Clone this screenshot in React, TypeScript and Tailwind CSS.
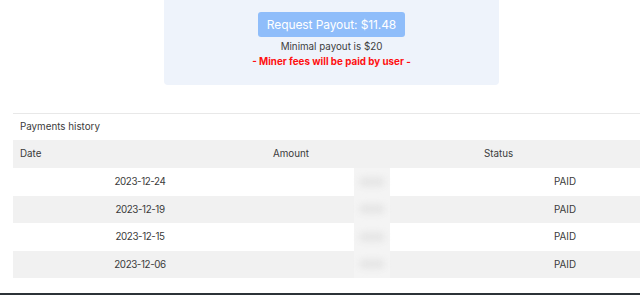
import React from "react";

const rows = [
  { date: "2023-12-24", gray: false },
  { date: "2023-12-19", gray: true },
  { date: "2023-12-15", gray: false },
  { date: "2023-12-06", gray: true },
];

export default function App() {
  return (
    <div
      className="w-[640px] h-[295px] overflow-hidden bg-white flex flex-col text-[#3a3a3a]"
      style={{ fontFamily: "Inter, 'Open Sans', sans-serif" }}
    >
      <div className="pl-[164px]">
        <div className="w-[335px] h-[85px] bg-[#eef3fb] rounded-b-[4px] flex flex-col items-center pt-[12px]">
          <div className="w-[147px] h-[25px] rounded-[3px] bg-[#8fbdfa] text-white text-[12px] tracking-[-0.1px] whitespace-nowrap flex items-center justify-center">
            Request Payout: $11.48
          </div>
          <div className="mt-[2px] text-[9.8px] leading-[16px] text-[#3d3d3d] whitespace-nowrap">Minimal payout is $20</div>
          <div className="text-[9.8px] leading-[13px] font-bold text-[#ff1010] whitespace-nowrap">- Miner fees will be paid by user -</div>
        </div>
      </div>
      <div className="mt-[28px] ml-[13px] w-[640px] border-t border-[#e8e8e8] text-[9.8px]">
        <div className="h-[26px] pl-[7px] pt-[1px] flex items-center">Payments history</div>
        <div className="h-[28px] pt-[1px] bg-[#f1f1f1] grid grid-cols-[254px_210px_176px] items-center">
          <div className="pl-[7px]">Date</div>
          <div className="pl-[6px]">Amount</div>
          <div className="pl-[7px]">Status</div>
        </div>
        {rows.map((r) => (
          <div
            key={r.date}
            className={`h-[27.5px] grid grid-cols-[254px_210px_176px] items-center ${r.gray ? "bg-[#f1f1f1]" : "bg-white"}`}
          >
            <div className="text-center tracking-[-0.4px] pt-[2px]">{r.date}</div>
            <div className="flex justify-center h-full">
              <div className="w-[36px] h-full bg-[#f4f4f4] flex items-center justify-center">
                <div className="w-[26px] h-[10px] rounded-full bg-[#e6e6e6] blur-[3px]" />
              </div>
            </div>
            <div className="text-center pt-[2px]">PAID</div>
          </div>
        ))}
      </div>
      <div className="mt-auto h-[2px] bg-[#2c3338]" />
    </div>
  );
}
